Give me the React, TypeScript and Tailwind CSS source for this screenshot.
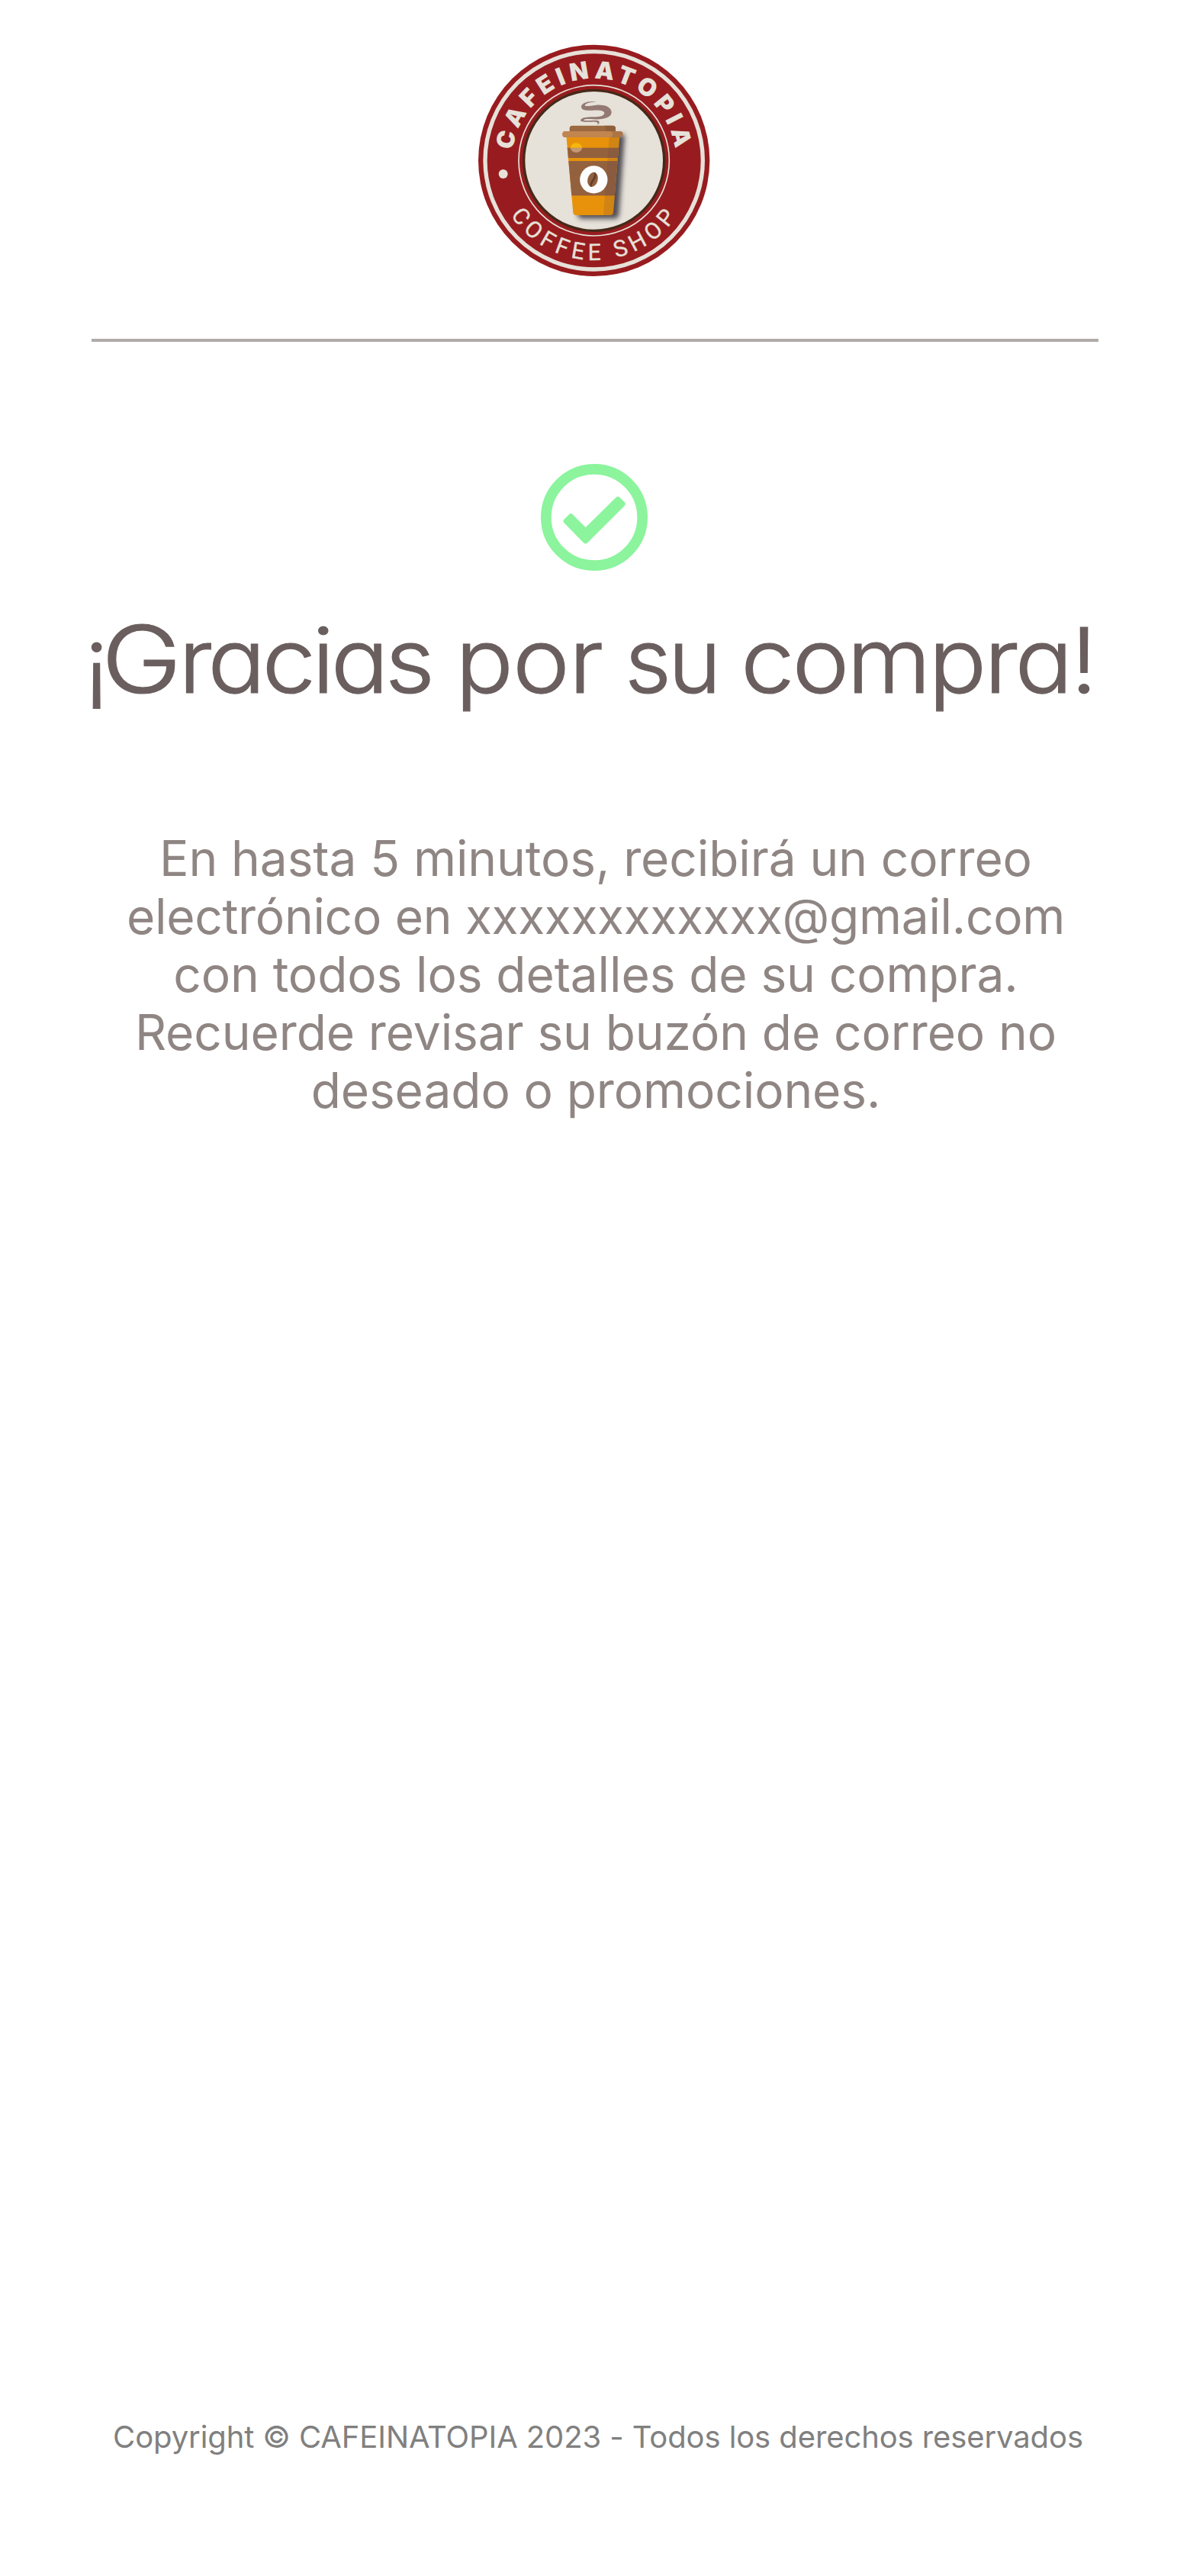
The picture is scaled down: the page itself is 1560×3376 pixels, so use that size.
const cream = "#e6e1d9";

function Logo() {
  return (
    <svg viewBox="0 0 1020 1020" className="block size-[340px]" role="img" aria-label="Cafeinatopia Coffee Shop">
      <defs>
        <path id="arc-top" d="M 506 833 A 322 322 0 0 1 506 189 A 322 322 0 0 1 506 833" />
        <path id="arc-bottom" d="M 114 511 A 392 392 0 0 0 898 511" />
        <clipPath id="cup">
          <path d="M397 415 H607 L582 715 Q581 726 570 726 H436 Q425 726 424 715 Z" />
        </clipPath>
        <filter id="shade" x="-30%" y="-30%" width="160%" height="160%">
          <feGaussianBlur stdDeviation="10" />
        </filter>
      </defs>
      <circle cx="506" cy="511" r="455" fill="#981c1f" />
      <circle cx="506" cy="511" r="428" fill="none" stroke={cream} strokeWidth="16" />
      <circle cx="506" cy="511" r="296" fill="none" stroke={cream} strokeWidth="5" />
      <circle cx="506" cy="511" r="276" fill={cream} stroke="#452919" strokeWidth="10" />
      <circle cx="149" cy="564" r="18" fill={cream} />
      <text
        fill={cream}
        fontFamily="Inter, sans-serif"
        fontWeight="900"
        fontSize="95"
        textAnchor="middle"
        textLength="925"
        transform="rotate(-0.6 506 511)"
      >
        <textPath href="#arc-top" startOffset="50%">CAFEINATOPIA</textPath>
      </text>
      <text
        fill={cream}
        fontFamily="Roboto, sans-serif"
        fontWeight="400"
        fontSize="90"
        stroke={cream}
        strokeWidth="1"
        textAnchor="middle"
        textLength="770"
        transform="rotate(0.6 506 511)"
      >
        <textPath href="#arc-bottom" startOffset="50%">COFFEE SHOP</textPath>
      </text>
      <path
        d="M420 405 H622 L600 715 Q598 736 585 736 H455 Q440 736 436 720 Z"
        transform="translate(5 4)"
        fill="#39343d"
        filter="url(#shade)"
        opacity="0.85"
      />
      <path
        d="M516 280 C480 276 456 286 456 300 C457 314 474 315 500 314 C530 311 548 316 547 325 C545 337 530 340 500 340 C470 340 454 345 453 353 C456 361 475 359 498 359 C516 358 525 361 519 371 C529 366 530 356 520 354 C500 351 480 356 466 353 C464 348 480 347 505 349 C545 351 575 342 575 321 C573 300 548 291 515 293 C490 297 470 299 470 295 C472 286 490 282 516 280 Z"
        fill="#937972"
      />
      <g clipPath="url(#cup)">
        <rect x="380" y="410" width="240" height="330" fill="#e8920b" />
        <rect x="380" y="461" width="240" height="40" fill="#94613e" />
        <rect x="380" y="513" width="240" height="136" fill="#94613e" />
        <path d="M567 410 H620 V740 H542 Z" fill="#54403f" opacity="0.16" />
      </g>
      <path d="M413 461 A24 24 0 0 1 460 461 Z" fill="#f4b70e" />
      <path d="M413 461 A24 24 0 0 0 460 461 Z" fill="#c39973" />
      <path d="M410 400 V385 Q410 374 421 374 H580 Q591 374 591 385 V400 Z" fill="#9b683f" />
      <path d="M552 400 V385 Q552 377 546 374 H580 Q591 374 591 385 V400 Z" fill="#8f5f3a" />
      <rect x="382" y="396" width="238" height="24" rx="12" fill="#ac7547" />
      <rect x="382" y="396" width="197" height="24" rx="12" fill="#c1854f" />
      <circle cx="505" cy="586" r="54.500" fill="#fdfdfd" />
      <g transform="rotate(16 501 586)">
        <ellipse cx="501" cy="586" rx="20" ry="29" fill="#91603d" />
        <path d="M498 557 C512 575 488 595 499 615 L506 614 C498 597 520 577 505 557 Z" fill="#63402a" />
      </g>
    </svg>
  );
}

function SuccessIcon() {
  return (
    <svg viewBox="0 0 420 420" className="block size-[140px]" aria-hidden="true">
      <circle cx="210" cy="210" r="189.500" fill="none" stroke="#8bf49d" strokeWidth="41" />
      <path
        d="M118 207 L176 265 L303 140 L321 157 L176 302 L100 225 Z"
        fill="#8bf49d"
        stroke="#8bf49d"
        strokeWidth="22"
        strokeLinejoin="round"
      />
    </svg>
  );
}

export default function App() {
  return (
    <div className="flex h-[3376px] w-[1560px] flex-col items-center bg-white pt-10 font-['Inter',sans-serif]">
      <header className="flex w-[1320px] flex-col items-center border-b-4 border-[#b0aba9] pb-16">
        <Logo />
      </header>
      <main className="flex flex-col items-center">
        <div className="mt-[160px] mr-0.5">
          <SuccessIcon />
        </div>
        <h1 className="mt-[37px] flex h-[160px] w-[1320px] text-[118px] leading-[160px] font-light whitespace-nowrap text-[#6a5f5e] [-webkit-text-stroke:1.2px_#6a5f5e] [font-feature-settings:'cv11','calt'_0]">
          <span className="-ml-[10px] w-[23px] shrink-0">¡</span>
          <span className="w-[101px] shrink-0 origin-[0_123px] scale-x-[1.2] scale-y-[1.04]">G</span>
          <span className="w-[363px] shrink-0 origin-left scale-x-[1.07] tracking-[-4.6px]">racias</span>
          <span className="w-[222px] shrink-0 origin-left scale-x-[1.07] tracking-[-1px]">por</span>
          <span className="w-[152px] shrink-0 tracking-[-4px]">su</span>
          <span className="origin-left scale-x-[1.07] tracking-[-2.9px]">compra!</span>
        </h1>
        <p className="mt-[142px] ml-0.5 text-center text-[64px] leading-[76px] tracking-[-0.1px] text-[#8f8684]">
          En hasta 5 minutos, recibirá un correo
          <br />
          <span className="tracking-[-0.3px]">electrónico en xxxxxxxxxxxx@gmail.com</span>
          <br />
          con todos los detalles de su compra.
          <br />
          Recuerde revisar su buzón de correo no
          <br />
          deseado o promociones.
        </p>
      </main>
      <footer className="mt-auto mb-[158px] ml-2 text-[40px] leading-[48px] tracking-[-0.1px] whitespace-nowrap text-[#808080]">
        Copyright © CAFEINATOPIA 2023 - Todos los derechos reservados
      </footer>
    </div>
  );
}
